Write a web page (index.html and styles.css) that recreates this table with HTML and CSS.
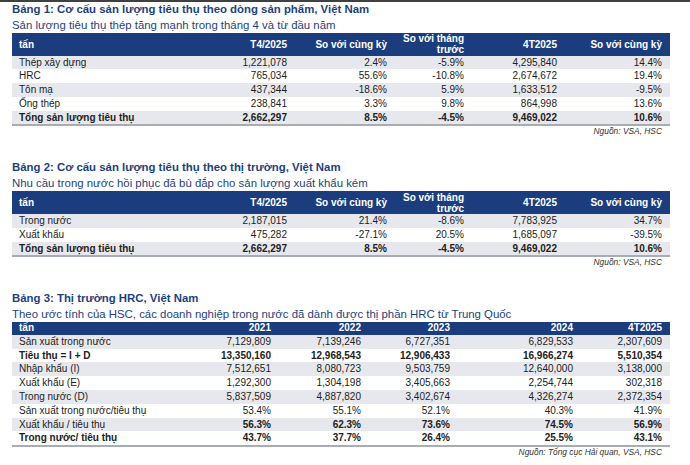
FILE: index.html
```html
<!DOCTYPE html>
<html lang="vi">
<head>
<meta charset="utf-8">
<title>Thị trường thép Việt Nam</title>
<link rel="stylesheet" href="styles.css">
</head>
<body>
<div class="topbar"></div>

<section class="block">
  <h2 class="title">Bảng 1: Cơ cấu sản lượng tiêu thụ theo dòng sản phẩm, Việt Nam</h2>
  <p class="subtitle">Sản lượng tiêu thụ thép tăng mạnh trong tháng 4 và từ đầu năm</p>
  <table class="data data-a">
    <colgroup><col class="c0"><col class="c1"><col class="c2"><col class="c3"><col class="c4"><col class="c5"></colgroup>
    <thead>
      <tr><th>tấn</th><th>T4/2025</th><th>So với cùng kỳ</th><th>So với tháng trước</th><th>4T2025</th><th>So với cùng kỳ</th></tr>
    </thead>
    <tbody>
      <tr><td>Thép xây dựng</td><td>1,221,078</td><td>2.4%</td><td>-5.9%</td><td>4,295,840</td><td>14.4%</td></tr>
      <tr><td>HRC</td><td>765,034</td><td>55.6%</td><td>-10.8%</td><td>2,674,672</td><td>19.4%</td></tr>
      <tr><td>Tôn mạ</td><td>437,344</td><td>-18.6%</td><td>5.9%</td><td>1,633,512</td><td>-9.5%</td></tr>
      <tr><td>Ống thép</td><td>238,841</td><td>3.3%</td><td>9.8%</td><td>864,998</td><td>13.6%</td></tr>
      <tr class="total"><td>Tổng sản lượng tiêu thụ</td><td>2,662,297</td><td>8.5%</td><td>-4.5%</td><td>9,469,022</td><td>10.6%</td></tr>
    </tbody>
  </table>
  <p class="source">Nguồn: VSA, HSC</p>
</section>

<section class="block">
  <h2 class="title">Bảng 2: Cơ cấu sản lượng tiêu thụ theo thị trường, Việt Nam</h2>
  <p class="subtitle">Nhu cầu trong nước hồi phục đã bù đắp cho sản lượng xuất khẩu kém</p>
  <table class="data data-a">
    <colgroup><col class="c0"><col class="c1"><col class="c2"><col class="c3"><col class="c4"><col class="c5"></colgroup>
    <thead>
      <tr><th>tấn</th><th>T4/2025</th><th>So với cùng kỳ</th><th>So với tháng trước</th><th>4T2025</th><th>So với cùng kỳ</th></tr>
    </thead>
    <tbody>
      <tr><td>Trong nước</td><td>2,187,015</td><td>21.4%</td><td>-8.6%</td><td>7,783,925</td><td>34.7%</td></tr>
      <tr><td>Xuất khẩu</td><td>475,282</td><td>-27.1%</td><td>20.5%</td><td>1,685,097</td><td>-39.5%</td></tr>
      <tr class="total"><td>Tổng sản lượng tiêu thụ</td><td>2,662,297</td><td>8.5%</td><td>-4.5%</td><td>9,469,022</td><td>10.6%</td></tr>
    </tbody>
  </table>
  <p class="source">Nguồn: VSA, HSC</p>
</section>

<section class="block">
  <h2 class="title">Bảng 3: Thị trường HRC, Việt Nam</h2>
  <p class="subtitle">Theo ước tính của HSC, các doanh nghiệp trong nước đã dành được thị phần HRC từ Trung Quốc</p>
  <table class="data data-c">
    <colgroup><col class="c0"><col class="c1"><col class="c2"><col class="c3"><col class="c4"><col class="c5"></colgroup>
    <thead>
      <tr><th>tấn</th><th>2021</th><th>2022</th><th>2023</th><th>2024</th><th>4T2025</th></tr>
    </thead>
    <tbody>
      <tr><td>Sản xuất trong nước</td><td>7,129,809</td><td>7,139,246</td><td>6,727,351</td><td>6,829,533</td><td>2,307,609</td></tr>
      <tr class="total"><td>Tiêu thụ = I + D</td><td>13,350,160</td><td>12,968,543</td><td>12,906,433</td><td>16,966,274</td><td>5,510,354</td></tr>
      <tr><td>Nhập khẩu (I)</td><td>7,512,651</td><td>8,080,723</td><td>9,503,759</td><td>12,640,000</td><td>3,138,000</td></tr>
      <tr><td>Xuất khẩu (E)</td><td>1,292,300</td><td>1,304,198</td><td>3,405,663</td><td>2,254,744</td><td>302,318</td></tr>
      <tr><td>Trong nước (D)</td><td>5,837,509</td><td>4,887,820</td><td>3,402,674</td><td>4,326,274</td><td>2,372,354</td></tr>
      <tr><td>Sản xuất trong nước/tiêu thụ</td><td>53.4%</td><td>55.1%</td><td>52.1%</td><td>40.3%</td><td>41.9%</td></tr>
      <tr class="bold-values"><td>Xuất khẩu / tiêu thụ</td><td>56.3%</td><td>62.3%</td><td>73.6%</td><td>74.5%</td><td>56.9%</td></tr>
      <tr class="total"><td>Trong nước/ tiêu thụ</td><td>43.7%</td><td>37.7%</td><td>26.4%</td><td>25.5%</td><td>43.1%</td></tr>
    </tbody>
  </table>
  <p class="source">Nguồn: Tổng cục Hải quan, VSA, HSC</p>
</section>
</body>
</html>
```

FILE: styles.css
```css
* {
  box-sizing: border-box;
}

body {
  margin: 0;
  background: #ffffff;
  font-family: "Liberation Sans", Arial, sans-serif;
  color: #222222;
}

.topbar {
  height: 2px;
  background: #404040;
}

.block {
  padding: 0 20px 0 12px;
}

.block + .block {
  margin-top: 24px;
}

.title {
  margin: 0;
  font-size: 11.4px;
  line-height: 14px;
  font-weight: bold;
  color: #1e3f7e;
}

.subtitle {
  margin: 2px 0 1px;
  font-size: 11.4px;
  line-height: 14px;
  color: #1e3f7e;
}

.data {
  width: 658px;
  table-layout: fixed;
  border-collapse: separate;
  border-spacing: 0;
  font-size: 10px;
  border-bottom: 2px solid #a8acb4;
}

.data th {
  background: #1c3d7d;
  color: #ffffff;
  font-weight: bold;
  text-align: right;
  vertical-align: middle;
  padding: 0 8px 0 7px;
  height: 22.5px;
  line-height: 11px;
}

.data td {
  padding: 0 8px 0 7px;
  height: 13.8px;
  line-height: 13.8px;
  text-align: right;
  white-space: nowrap;
}

.data th:first-child,
.data td:first-child {
  text-align: left;
}

.data tbody tr:nth-child(odd) td {
  background: #e6e8ed;
}

.data .total td {
  font-weight: bold;
}

.data .bold-values td + td {
  font-weight: bold;
}

.data-c th {
  height: 12.5px;
  line-height: 12.5px;
}

.data-a .c0 { width: 193px; }
.data-a .c1 { width: 90px; }
.data-a .c2 { width: 100px; }
.data-a .c3 { width: 77px; }
.data-a .c4 { width: 93px; }
.data-a .c5 { width: 105px; }

.data-c .c0 { width: 177px; }
.data-c .c1 { width: 90px; }
.data-c .c2 { width: 90px; }
.data-c .c3 { width: 89px; }
.data-c .c4 { width: 123px; }
.data-c .c5 { width: 89px; }

.source {
  margin: 0;
  padding-right: 8px;
  text-align: right;
  font-style: italic;
  font-size: 8.4px;
  line-height: 10px;
  color: #333333;
}
```
